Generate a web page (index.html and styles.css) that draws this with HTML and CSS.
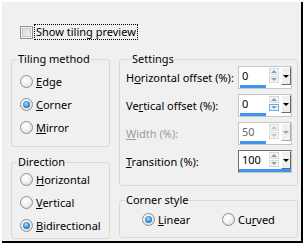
FILE: index.html
```html
<!DOCTYPE html>
<html>
<head>
<meta charset="utf-8">
<link rel="stylesheet" href="styles.css">
</head>
<body>
<div class="frame">
  <div class="preview-row">
    <span class="checkbox"></span>
    <span class="focus-label">Show tiling preview</span>
  </div>
  <div class="cols">
    <div class="col-left">
      <fieldset class="group tiling">
        <legend>Tiling method</legend>
        <div class="opt"><span class="radio"></span><span><u>E</u>dge</span></div>
        <div class="opt"><span class="radio on"></span><span><u>C</u>orner</span></div>
        <div class="opt"><span class="radio"></span><span><u>M</u>irror</span></div>
      </fieldset>
      <fieldset class="group direction">
        <legend>Direction</legend>
        <div class="opt"><span class="radio"></span><span><u>H</u>orizontal</span></div>
        <div class="opt"><span class="radio"></span><span><u>V</u>ertical</span></div>
        <div class="opt"><span class="radio on"></span><span><u>B</u>idirectional</span></div>
      </fieldset>
    </div>
    <div class="col-right">
      <fieldset class="group settings">
        <legend>Settings</legend>
        <div class="srow">
          <span class="slabel">H<u>o</u>rizontal offset (%):</span>
          <div class="spin">
            <div class="spin-top">
              <span class="field">0</span>
              <span class="arrows"><span class="arr up"></span><span class="arr dn"></span></span>
              <span class="drop"></span>
            </div>
            <div class="bar"></div>
          </div>
        </div>
        <div class="srow">
          <span class="slabel">Ve<u>r</u>tical offset (%):</span>
          <div class="spin">
            <div class="spin-top">
              <span class="field">0</span>
              <span class="arrows"><span class="arr up"></span><span class="arr dn hot"></span></span>
              <span class="drop"></span>
            </div>
            <div class="bar"></div>
          </div>
        </div>
        <div class="srow disabled">
          <span class="slabel"><u>W</u>idth (%):</span>
          <div class="spin">
            <div class="spin-top">
              <span class="field">50</span>
              <span class="arrows"><span class="arr up"></span><span class="arr dn"></span></span>
              <span class="drop"></span>
            </div>
            <div class="bar"></div>
          </div>
        </div>
        <div class="srow">
          <span class="slabel"><u>T</u>ransition (%):</span>
          <div class="spin focus">
            <div class="spin-top">
              <span class="field">100</span>
              <span class="arrows"><span class="arr up"></span><span class="arr dn"></span></span>
              <span class="drop"></span>
            </div>
            <div class="bar full"></div>
          </div>
        </div>
      </fieldset>
      <fieldset class="group corner">
        <legend>Corner style</legend>
        <div class="corner-row">
          <div class="opt wide"><span class="radio on"></span><span><u>L</u>inear</span></div>
          <div class="opt"><span class="radio"></span><span>Cu<u>r</u>ved</span></div>
        </div>
      </fieldset>
    </div>
  </div>
</div>
</body>
</html>
```
FILE: styles.css
```css
* { box-sizing: border-box; }
html, body { margin: 0; padding: 0; background: #fff; }
body {
  font-family: "Noto Sans", "Open Sans", sans-serif;
  font-size: 11px;
  color: #000;
}
u { text-decoration: underline; text-underline-offset: 1px; }

.frame {
  margin: 2px 0 0 2px;
  width: 301px;
  height: 241px;
  background: #f0f0f0;
  border-right: 2px solid #000;
  border-bottom: 2px solid #000;
  padding: 22px 0 0 9px;
}

.preview-row {
  display: flex;
  align-items: center;
  height: 16px;
  padding-left: 9px;
}
.checkbox {
  width: 13px;
  height: 13px;
  border: 1px solid #8f8f8f;
  background: linear-gradient(135deg, #d4d4d4, #f7f7f7);
  box-shadow: inset 0 0 0 1px #f4f4f4, inset 0 0 0 2px #c9c9c9;
  margin-right: 1px;
  flex: none;
}
.focus-label {
  border: 1px dotted #000;
  padding: 0 1px;
  line-height: 14px;
}

.cols {
  display: flex;
  gap: 9px;
  margin-top: 12px;
}
.col-left { width: 99px; flex: none; display: flex; flex-direction: column; }
.col-right { width: 179px; flex: none; display: flex; flex-direction: column; }

.group {
  margin: 0;
  padding: 0;
  min-width: 0;
  border: 1px solid #d9d9d9;
  border-radius: 3px;
}
.group legend {
  margin-left: 5px;
  padding: 0 1px;
  line-height: 12px;
}

.tiling { margin-top: 1px; padding: 5px 0 7px; }
.direction { margin-top: 9px; padding: 0 0 1px; }
.settings { margin-top: 1px; padding: 1px 5px 12px 6px; }
.corner { margin-top: 8px; padding: 2px 0 6px; }

.opt {
  display: flex;
  align-items: center;
  gap: 3px;
  height: 23px;
  padding-left: 8px;
}
.radio {
  width: 13px;
  height: 13px;
  flex: none;
  border-radius: 50%;
  border: 1px solid #8e8f8f;
  background: radial-gradient(circle at 40% 35%, #ffffff 0, #f1f1f1 45%, #d2d2d2 100%);
  display: grid;
  place-items: center;
}
.radio.on::after {
  content: "";
  width: 7px;
  height: 7px;
  border-radius: 50%;
  background: radial-gradient(circle at 45% 40%, #b6e6ff 0, #3a9ae0 45%, #0b4e8c 100%);
}

.srow {
  display: flex;
  align-items: center;
  height: 23px;
}
.srow + .srow { margin-top: 5px; }
.srow.disabled { color: #9b9b9b; }
.slabel { white-space: nowrap; flex: 1; min-width: 0; }

.spin {
  flex: none;
  width: 54px;
  height: 23px;
  border: 1px solid #c6c6c6;
  background: #fff;
  display: flex;
  flex-direction: column;
}
.spin.focus { border-color: #6e6e6e #c6c6c6 #c6c6c6 #6e6e6e; }
.spin-top { display: flex; height: 18px; }
.field {
  width: 29px;
  flex: none;
  padding-left: 3px;
  line-height: 18px;
  color: #000;
}
.disabled .field { color: #6d6d6d; }
.arrows {
  width: 13px;
  flex: none;
  display: flex;
  flex-direction: column;
  gap: 1px;
  padding: 1px 0 0 1px;
}
.arr {
  width: 10px;
  height: 7px;
  border: 1px solid #d9d9d9;
  background: #f4f4f4;
  display: grid;
  place-items: center;
}
.arr.hot { border-color: #6ea8dc; background: #eaf4fc; }
.arr::after {
  content: "";
  width: 0;
  height: 0;
  border-left: 3px solid transparent;
  border-right: 3px solid transparent;
}
.arr.up::after { border-bottom: 3px solid #7f9fc4; }
.arr.dn::after { border-top: 3px solid #7f9fc4; }
.disabled .arr::after { opacity: 0.55; }

.drop {
  width: 10px;
  flex: none;
  height: 18px;
  background: #f0f0f0;
  border-style: solid;
  border-width: 1px;
  border-color: #ffffff #6a6a6a #6a6a6a #ffffff;
  display: grid;
  place-items: center;
}
.drop::after {
  content: "";
  width: 0;
  height: 0;
  border-left: 3px solid transparent;
  border-right: 3px solid transparent;
  border-top: 3px solid #000;
}
.disabled .drop::after { border-top-color: #a0a0a0; }
.disabled .drop { border-color: #ffffff #a8a8a8 #a8a8a8 #ffffff; }

.bar {
  height: 3px;
  width: 26px;
  margin-left: 1px;
  background: #3d95f0;
}
.bar.full { width: auto; margin-left: 0; }

.corner-row { display: flex; padding-left: 14px; }
.opt.wide { width: 80px; }
```
